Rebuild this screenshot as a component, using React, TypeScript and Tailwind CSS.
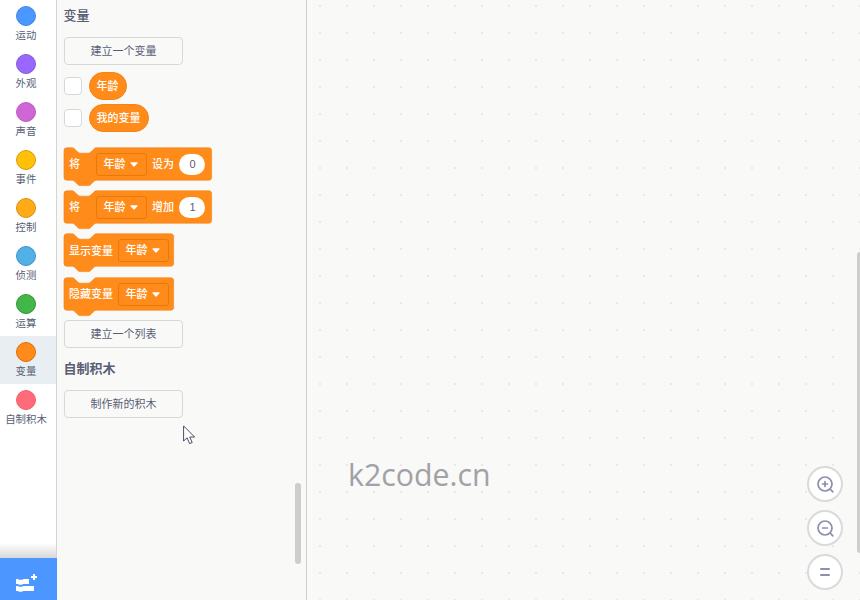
import React from "react";

const categories = [
  { name: "运动", fill: "#4C97FF", stroke: "#3F88E8" },
  { name: "外观", fill: "#9966FF", stroke: "#855CD6" },
  { name: "声音", fill: "#D065D4", stroke: "#BD5CC4" },
  { name: "事件", fill: "#FFC107", stroke: "#D99A0B" },
  { name: "控制", fill: "#FFAB19", stroke: "#DB8E14" },
  { name: "侦测", fill: "#52B0E7", stroke: "#3E95CC" },
  { name: "运算", fill: "#43B649", stroke: "#389438" },
  { name: "变量", fill: "#FF8C1A", stroke: "#DB6E00", active: true },
  { name: "自制积木", fill: "#FF6B78", stroke: "#F2606E" },
];

function Sidebar() {
  return (
    <div className="flex w-[57px] shrink-0 flex-col border-r border-[#d4d4d6] bg-white">
      {categories.map((c) => (
        <div
          key={c.name}
          className={`flex h-12 w-14 shrink-0 flex-col items-center pr-[4px] pt-[6px] ${c.active ? "bg-[#e9eef2]" : ""}`}
        >
          <div
            className="size-5 shrink-0 rounded-full border"
            style={{ backgroundColor: c.fill, borderColor: c.stroke }}
          />
          <div className="mt-[3px] whitespace-nowrap text-[10.4px] leading-[14px]">{c.name}</div>
        </div>
      ))}
      <div className="mt-auto h-[15px] w-14 shrink-0 bg-gradient-to-b from-white to-[#d8d8d8]" />
      <div className="flex h-[42px] w-[57px] shrink-0 bg-[#4C97FF] pl-4 pt-4">
        <svg width="22" height="20" viewBox="0 0 22 20" fill="#fff">
          <path d="M0 5.5q0-.5.5-.5H2l1 .7h3.4l1-.7H13v5H7l-1 .8H3L2 10H.5q-.5 0-.5-.5z" />
          <path d="M0 12.5q0-.5.5-.5H2l1 .7h3.4l1-.7h10.1q.5 0 .5.5v4q0 .5-.5.5H7l-1 .8H3L2 17H.5q-.5 0-.5-.5z" />
          <path d="M17 0h2v2h2v2h-2v2h-2V4h-2V2h2z" />
        </svg>
      </div>
    </div>
  );
}

function FlyoutButton({ label, className }: { label: string; className: string }) {
  return (
    <div
      className={`flex h-7 w-[119.6px] shrink-0 items-center justify-center rounded-[4px] border border-[#d6d8dc] pt-px text-[11px] leading-none ${className}`}
    >
      {label}
    </div>
  );
}

function Reporter({ label, className }: { label: string; className: string }) {
  return (
    <div className={`flex shrink-0 items-center gap-[7px] ${className}`}>
      <div className="size-[18px] rounded-[4px] border border-[#d6d8dc] bg-white" />
      <div className="flex h-7 items-center rounded-full border border-[#f58518] bg-[#FF8C1A] px-[7px] text-[11px] font-medium leading-none text-white">
        {label}
      </div>
    </div>
  );
}

function Dropdown() {
  return (
    <div className="flex h-[23px] w-[51px] items-center rounded-[3px] border border-[#e8780a] pl-[6.5px]">
      年龄
      <svg className="ml-[4.5px]" width="8" height="5" viewBox="0 0 8 5">
        <path d="M1 .9H7L4 4.1z" fill="#fff" stroke="#fff" strokeWidth="1.2" strokeLinejoin="round" />
      </svg>
    </div>
  );
}

function Block({ width, children }: { width: number; children: React.ReactNode }) {
  const w = width / 0.675 - 4;
  const shape = `m0 4A4 4 0 0 1 4 0H12c2 0 3 1 4 2l4 4c1 1 2 2 4 2h12c2 0 3-1 4-2l4-4c1-1 2-2 4-2H${w}a4 4 0 0 1 4 4v40a4 4 0 0 1-4 4H48c-2 0-3 1-4 2l-4 4c-1 1-2 2-4 2h-12c-2 0-3-1-4-2l-4-4c-1-1-2-2-4-2H4a4 4 0 0 1-4-4z`;
  return (
    <div
      className="relative flex h-[33px] shrink-0 items-center pl-[5.5px] text-[11px] font-medium leading-none text-white"
      style={{ width }}
    >
      <svg className="absolute left-0 top-0 overflow-visible" width={width} height="39">
        <path d={shape} transform="translate(0 -.2) scale(.675)" fill="#FF8C1A" stroke="#F58518" strokeWidth="1" />
      </svg>
      <div className="relative flex items-center">{children}</div>
    </div>
  );
}

function SetBlock({ verb, value }: { verb: string; value: string }) {
  return (
    <Block width={147.6}>
      <span>将</span>
      <div className="ml-4">
        <Dropdown />
      </div>
      <span className="ml-[5px]">{verb}</span>
      <div className="ml-[5px] flex h-[21px] w-[26px] items-center justify-center rounded-full bg-white pl-px font-normal text-[#575E75]">
        {value}
      </div>
    </Block>
  );
}

function ShowBlock({ label }: { label: string }) {
  return (
    <Block width={109.6}>
      <span className="pt-px">{label}</span>
      <div className="ml-[5px]">
        <Dropdown />
      </div>
    </Block>
  );
}

function Flyout() {
  return (
    <div className="relative flex w-[250px] shrink-0 border-r border-[#cfcfcf] bg-[#f9f9f8]">
      <div className="flex w-[238px] flex-col pl-[6.6px]">
        <div className="mt-[7px] h-[18px] shrink-0 text-[13px] font-medium leading-[18px]">变量</div>
        <FlyoutButton label="建立一个变量" className="mt-[12px]" />
        <Reporter label="年龄" className="mt-[7px]" />
        <Reporter label="我的变量" className="mt-[4px]" />
        <div className="mt-4 flex shrink-0 flex-col gap-[10.2px]">
          <SetBlock verb="设为" value="0" />
          <SetBlock verb="增加" value="1" />
          <ShowBlock label="显示变量" />
          <ShowBlock label="隐藏变量" />
        </div>
        <FlyoutButton label="建立一个列表" className="mt-[9.4px]" />
        <div className="mt-[12px] h-[18px] shrink-0 text-[13px] font-bold leading-[18px]">自制积木</div>
        <FlyoutButton label="制作新的积木" className="mt-[12px]" />
      </div>
      <div className="mt-[483px] h-[81px] w-[6px] rounded-full bg-[#cecdce]" />
    </div>
  );
}

function RoundButton({ children }: { children: React.ReactNode }) {
  return (
    <div className="flex size-9 items-center justify-center rounded-full border-2 border-[#dadada] bg-white">
      <svg width="20" height="20" viewBox="0 0 20 20" fill="none" stroke="#8d8fae" strokeWidth="1.7" strokeLinecap="round">
        {children}
      </svg>
    </div>
  );
}

function Workspace() {
  return (
    <div className="relative flex flex-1 justify-end bg-[#f9f9f8]">
      <svg className="absolute inset-0 size-full">
        <defs>
          <pattern id="grid" x="12" y="5" width="27" height="27" patternUnits="userSpaceOnUse">
            <rect width="2" height="2" fill="#e8e8e8" />
          </pattern>
        </defs>
        <rect width="100%" height="100%" fill="url(#grid)" />
      </svg>
      <div className="absolute left-[41px] top-[455px] font-['Open_Sans','Noto_Sans',sans-serif] text-[30.3px] leading-10 text-[#a2a1a6]">
        k2code.cn
      </div>
      <div className="relative mr-[14px] mt-[466px] flex flex-col gap-2">
        <RoundButton>
          <circle cx="10" cy="10" r="7" />
          <path d="M15.2 15.2l2.6 2.6M10 7.6v4.8M7.6 10h4.8" />
        </RoundButton>
        <RoundButton>
          <circle cx="10" cy="10" r="7" />
          <path d="M15.2 15.2l2.6 2.6M7.6 10h4.8" />
        </RoundButton>
        <RoundButton>
          <path d="M6 7h8M6 13h8" strokeWidth="2" />
        </RoundButton>
      </div>
      <div className="relative mt-[252px] h-[301px] w-[3px] rounded-l-full bg-[#cecdce]" />
    </div>
  );
}

export default function App() {
  return (
    <div className="relative flex h-[600px] w-[860px] overflow-hidden bg-[#f9f9f8] font-['Liberation_Sans','Noto_Sans_CJK_SC',sans-serif] text-[#575E75]">
      <Sidebar />
      <Flyout />
      <Workspace />
      <svg className="absolute left-[183px] top-[425px]" width="13" height="20" viewBox="0 0 13 20">
        <path d="M.6.9V16l3.5-3.2 2.5 5.8 2.6-1.1-2.5-5.5h4.9z" fill="#fff" stroke="#484d60" strokeWidth="1" />
      </svg>
    </div>
  );
}
